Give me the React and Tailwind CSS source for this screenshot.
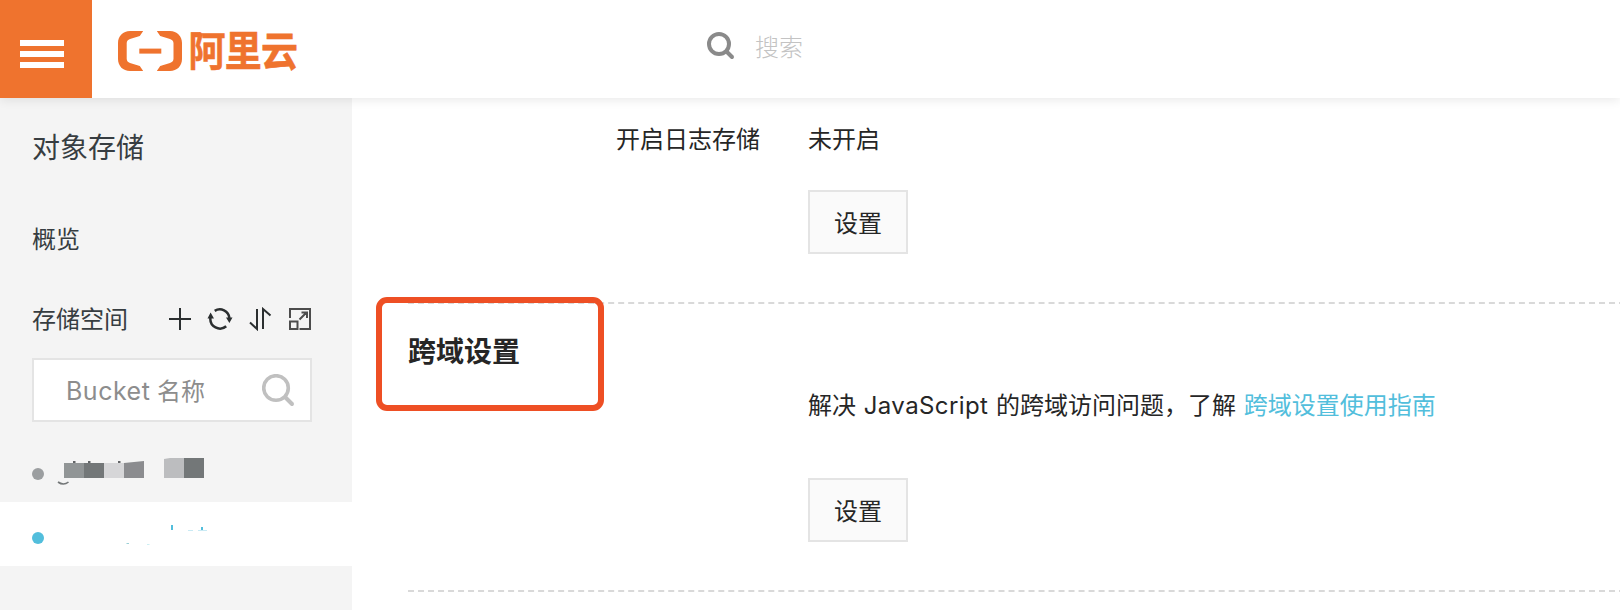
const FONT = "font-['Inter','Noto_Sans_CJK_SC',sans-serif]";

function AliyunMark() {
  return (
    <svg width="64" height="40" viewBox="0 0 64 40" fill="#ef732e" aria-hidden="true">
      <path d="M25.200 0H12C5 0 0 5 0 12v16c0 7 5 12 12 12h13.200l-3.400-5-9.800-3C10 31.200 8.700 30 8.700 27.800V12.200c0-2.200 1.300-3.400 3.300-4.200l9.800-3z" />
      <path d="M38.800 0H52c7 0 12 5 12 12v16c0 7-5 12-12 12H38.800l3.400-5 9.800-3c2-.8 3.500-2 3.500-4.200V12.200c0-2.200-1.500-3.400-3.500-4.200l-9.800-3z" />
      <rect x="21.300" y="17.600" width="22" height="5" />
    </svg>
  );
}

function Header() {
  return (
    <header className="relative z-10 flex h-[98px] shrink-0 items-center bg-white shadow-[0_2px_10px_rgba(0,0,0,0.09)]">
      <button className="flex h-[98px] w-[92px] flex-col gap-[5px] bg-[#ef732e] pt-[40px] pl-[20px]" aria-label="菜单">
        <span className="h-[6px] w-[43.500px] bg-white" />
        <span className="h-[6px] w-[43.500px] bg-white" />
        <span className="h-[6px] w-[43.500px] bg-white" />
      </button>
      <div className="flex h-[98px] w-[614px] items-center pt-[4px] pl-[25.500px]">
        <AliyunMark />
        <span className="ml-[7px] origin-left scale-y-[1.120] text-[37px] leading-[40px] font-bold tracking-[-0.800px] whitespace-nowrap text-[#ef732e] [-webkit-text-stroke:0.5px_#ef732e]">
          阿里云
        </span>
      </div>
      <div className="flex items-center">
        <svg width="29" height="29" viewBox="0 0 29 29" fill="none" stroke="#8a8a8a" strokeLinecap="round" className="mb-[6px] ml-px" aria-hidden="true">
          <circle cx="12" cy="12" r="10" strokeWidth="4" />
          <path d="M19.500 19.500l5.500 5.500" strokeWidth="4" />
        </svg>
        <span className="mb-[2px] ml-[19px] text-[24px] leading-[36px] font-light text-[#c3c3c3]">搜索</span>
      </div>
    </header>
  );
}

function ToolIcons() {
  return (
    <svg width="143" height="24" viewBox="0 0 143 24" fill="none" stroke="#2b2f30" strokeWidth="2" aria-hidden="true">
      <path d="M0 12h22M11 1v22" />
      <path d="M45.700 3.900A9.600 9.600 0 0 1 60.400 11M57.200 19.200A9.600 9.600 0 0 1 41.400 11" strokeWidth="2.500" />
      <path d="M57 10.500h6.500l-3.100 5.500zM38.500 11.500h6.500l-3.400-6z" fill="#2b2f30" stroke="none" />
      <path d="M88 2v20l-7-6.500M94 22V2l7.500 6.500" />
      <path d="M121 11V2h20v20h-10.500M121 14.500h7.500v7.500h-7.500zM130.500 12.500l7-7M132.500 5.500h5.500v5.500" stroke="#4c4c4c" />
    </svg>
  );
}

function BucketRow({ active, children }) {
  return (
    <li className={active ? "flex h-16 items-center bg-white pt-2 pl-8" : "flex h-16 items-center pt-2 pl-8"}>
      <span className={active ? "size-3 rounded-full bg-[#52bedc]" : "size-3 rounded-full bg-[#9b9ea0]"} />
      {children}
    </li>
  );
}

function Sidebar() {
  return (
    <aside className="flex w-[352px] shrink-0 flex-col bg-[#f4f4f4] pt-[30px] text-[#373d41]">
      <h2 className="pl-8 text-[28px] leading-[40px]">对象存储</h2>
      <a className="mt-[54px] pl-8 text-[24px] leading-[36px]">概览</a>
      <div className="mt-[43px] flex h-9 items-center pl-8">
        <span className="w-[137px] pt-px text-[24px] leading-[36px]">存储空间</span>
        <ToolIcons />
      </div>
      <div className="mt-[21px] ml-8 flex h-16 w-[280px] items-center justify-between border-2 border-[#e4e4e4] bg-white pr-[15px] pl-8">
        <span className="pt-0.5 text-[24px] leading-[36px] text-[#8d8d8d]">
          <span className="text-[25px] tracking-[0.500px]">Bucket</span> 名称
        </span>
        <svg width="33" height="33" viewBox="0 0 33 33" fill="none" stroke="#c0c0c0" strokeLinecap="round" className="-ml-px" aria-hidden="true">
          <circle cx="14" cy="14" r="12.300" strokeWidth="3.600" />
          <path d="M23.500 23.500l6.500 6.500" strokeWidth="4" />
        </svg>
      </div>
      <ul className="mt-4">
        <BucketRow>
          <svg width="150" height="30" viewBox="0 0 150 30" className="mb-[8px] ml-[12px]" aria-hidden="true">
            <path d="M17 6h2.500v3H17zM32 6h2.500v3H32zM62 6h2.500v3H62zM24 8h3v1h-3z" fill="#626466" />
            <path d="M8 8h20v15H8z" fill="#919596" />
            <path d="M28 8h20v15H28z" fill="#737778" />
            <path d="M48 8h20v15H48z" fill="#d6d6d8" />
            <path d="M68 8l20-2v17H68z" fill="#8b8c8f" />
            <path d="M108 4l6-1h14v20h-20z" fill="#bcbdbf" />
            <path d="M128 3h20v20h-20z" fill="#737778" />
            <path d="M2 27q5.500 4 10.500 0" fill="none" stroke="#737778" strokeWidth="1.600" />
          </svg>
        </BucketRow>
        <BucketRow active>
          <svg width="170" height="30" viewBox="0 0 170 30" className="ml-[12px]" aria-hidden="true">
            <path d="M115 2h2v5h-2zM145 4h2v3h-2z" fill="#52bedc" />
            <path d="M132 7h5v1h-5zM142 7h9v1h-9z" fill="#c9eaf4" />
            <path d="M70.500 20h2.500v1h-2.500z" fill="#9bd0d6" />
            <path d="M91 21h2.500v1H91z" fill="#cdeff3" />
          </svg>
        </BucketRow>
      </ul>
    </aside>
  );
}

function SettingButton() {
  return (
    <button className="flex h-16 w-[100px] items-center justify-center border-2 border-[#e4e4e4] bg-[#fafafa] pt-1 text-[24px] leading-[36px] text-[#262626]">
      设置
    </button>
  );
}

function Content() {
  return (
    <main className="flex min-w-0 grow flex-col overflow-hidden pl-[56px] text-[24px] leading-[36px] text-[#262626]">
      <section className="flex h-[204px] shrink-0 pt-[24px]">
        <span className="w-[352px] text-right">开启日志存储</span>
        <div className="ml-12 flex flex-col">
          <span>未开启</span>
          <div className="mt-[32px]"><SettingButton /></div>
        </div>
      </section>
      <section className="relative flex h-[288px] w-[1217px] shrink-0 flex-col border-t-2 border-dashed border-[#d9d9d9]">
        <div className="absolute -top-[7px] -left-[32px] h-[114px] w-[228px] rounded-[11px] border-[6px] border-[#ee4f24]" />
        <h3 className="mt-[28px] text-[28px] leading-[40px] font-bold">跨域设置</h3>
        <p className="mt-[16px] ml-[400px] whitespace-nowrap">
          解决 <span className="ml-px tracking-[0.400px]">JavaScript</span> <span className="ml-px">的跨域访问问题，了解</span> <a className="ml-px text-[#52bedc]">跨域设置使用指南</a>
        </p>
        <div className="mt-[54px] ml-[400px]"><SettingButton /></div>
      </section>
      <div className="w-[1217px] shrink-0 border-t-2 border-dashed border-[#d9d9d9]" />
    </main>
  );
}

export default function App() {
  return (
    <div lang="zh-CN" className={`${FONT} flex h-[610px] w-[1620px] flex-col overflow-hidden bg-white`}>
      <Header />
      <div className="flex grow">
        <Sidebar />
        <Content />
      </div>
    </div>
  );
}
